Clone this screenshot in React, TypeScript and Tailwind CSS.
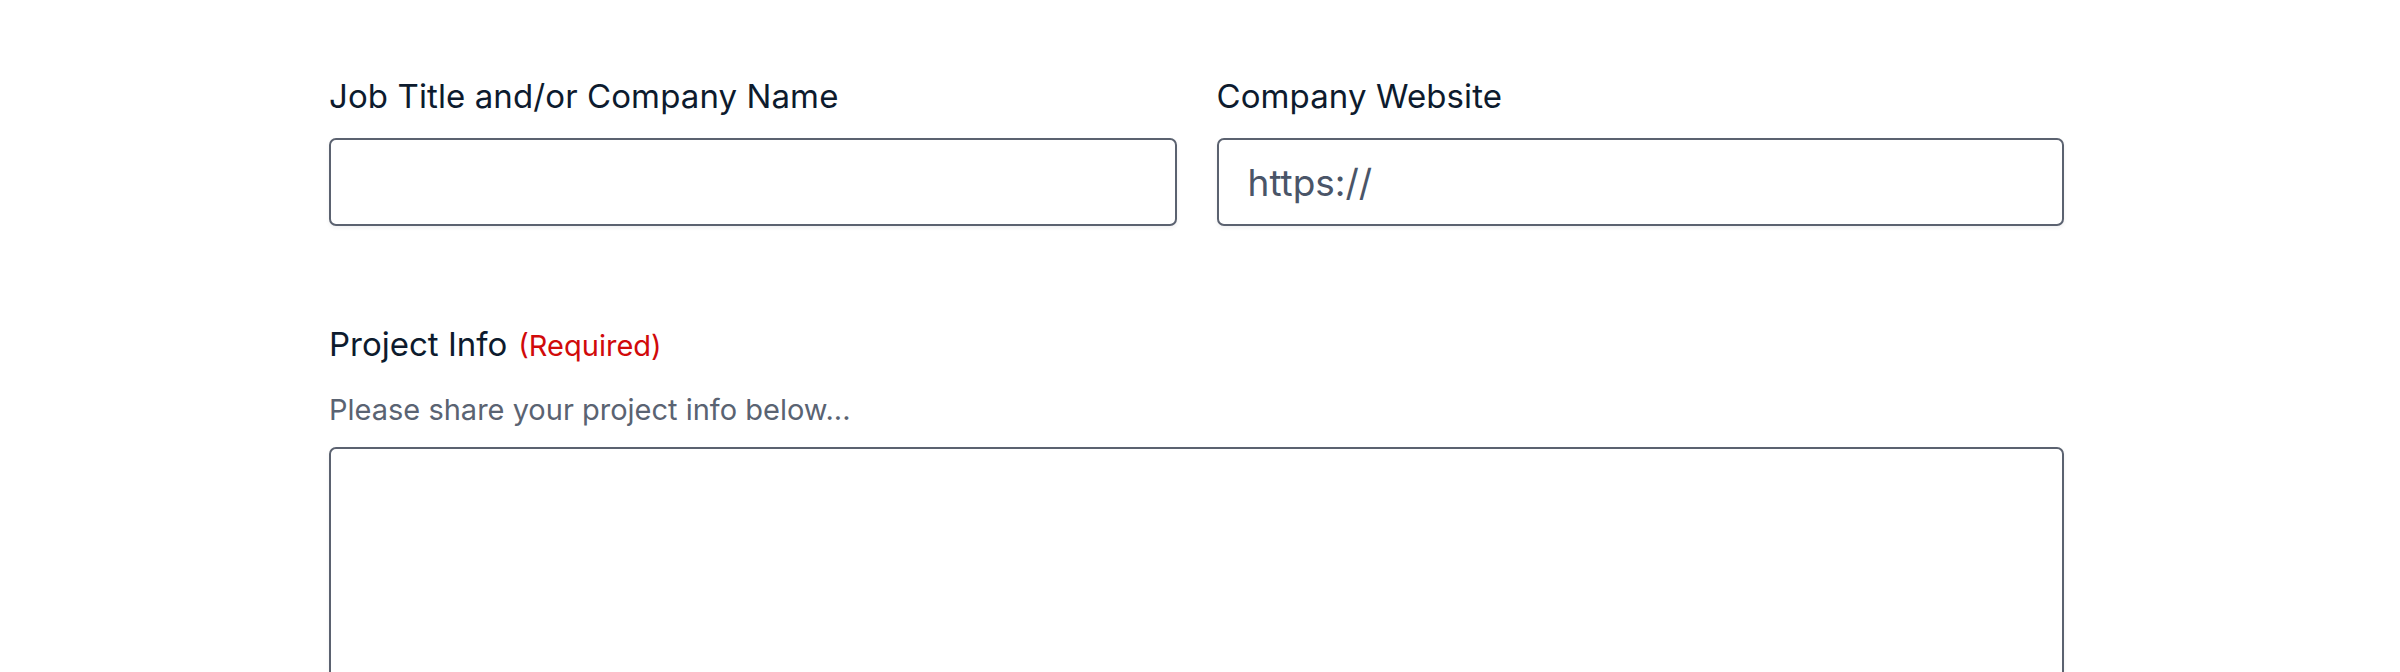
export default function App() {
  const font = { fontFamily: 'Inter, "Liberation Sans", sans-serif' }
  return (
    <div className="min-h-screen bg-white" style={font}>
      <form className="ml-[329px] w-[1735px] pt-[76px]">
        <div className="grid grid-cols-2 gap-x-[40px]">
          <div>
            <label className="block text-[33px] leading-[40px] tracking-[0.1px] text-[#0d1b2e]">
              Job Title and/or Company Name
            </label>
            <input
              type="text"
              className="mt-[22px] block h-[88px] w-full rounded-[7px] border-2 border-[#5b6270] bg-white px-[29px] text-[37px] text-[#1f2937] shadow-[0_2px_4px_rgba(15,23,42,0.06)] outline-none"
            />
          </div>
          <div>
            <label className="block text-[33px] leading-[40px] tracking-[0.1px] text-[#0d1b2e]">
              Company Website
            </label>
            <input
              type="text"
              placeholder="https://"
              className="mt-[22px] block h-[88px] w-full rounded-[7px] border-2 border-[#5b6270] bg-white px-[29px] text-[37px] text-[#1f2937] placeholder:text-[#4a5568] shadow-[0_2px_4px_rgba(15,23,42,0.06)] outline-none"
            />
          </div>
        </div>

        <div className="mt-[98px]">
          <label className="flex items-baseline gap-[11px] text-[33px] leading-[40px] text-[#0d1b2e]">
            Project Info
            <span className="text-[29px] text-[#d10a0a]">(Required)</span>
          </label>
          <p className="mt-[26px] text-[29px] leading-[36px] text-[#5a6372]">
            Please share your project info below...
          </p>
          <textarea className="mt-[19px] block h-[320px] w-full resize-none rounded-[7px] border-2 border-[#5b6270] bg-white p-[24px] text-[34px] shadow-[0_2px_4px_rgba(15,23,42,0.06)] outline-none" />
        </div>
      </form>
    </div>
  )
}
